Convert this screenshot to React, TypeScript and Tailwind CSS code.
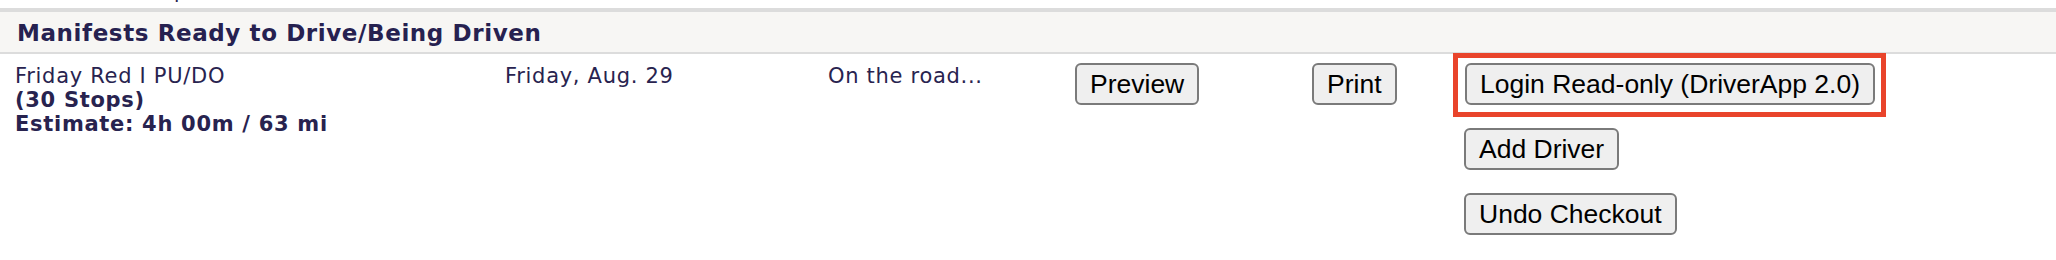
// Manifest table section: "Ready to Drive/Being Driven" header plus one manifest row
// with its action buttons. The login button carries a red highlight box.

const TEXT_FONT = "font-['DejaVu_Sans','Verdana',sans-serif]";
const BUTTON_FONT = "font-['Liberation_Sans','Arial',sans-serif]";

function LegacyButton({ children }: { children: React.ReactNode }) {
  return (
    <button
      type="button"
      className={`${BUTTON_FONT} flex h-[42px] items-center whitespace-nowrap rounded-[6px] border-2 border-[#7a7a7a] bg-[#efefef] px-[13px] text-[26.5px] leading-none tracking-normal text-black`}
    >
      {children}
    </button>
  );
}

export default function App() {
  return (
    <div className={`${TEXT_FONT} h-[260px] w-full overflow-hidden bg-white text-[#28234f]`}>
      {/* tail of the previous section, clipped */}
      <div className="h-[8px] overflow-hidden">
        <div className="-mt-[19px] pl-[174px] text-[20px] leading-[20px]">p</div>
      </div>

      {/* Section header */}
      <div className="border-t-4 border-b-2 border-[#dcdcdc] bg-[#f7f6f4]">
        <h2 className="h-[40px] pl-[17px] pt-[2px] text-[23px] font-bold leading-[38px] tracking-[0.6px] text-[#262150]">
          Manifests Ready to Drive/Being Driven
        </h2>
      </div>

      {/* Manifest row */}
      <div className="flex pl-[15px] text-[21px] leading-[24px]">
        <div className="w-[490px] shrink-0 pt-[10px] tracking-[0.7px]">
          <div>Friday Red I PU/DO</div>
          <div className="font-bold">(30 Stops)</div>
          <div className="font-bold">Estimate: 4h 00m / 63 mi</div>
        </div>
        <div className="w-[323px] shrink-0 pt-[10px] tracking-[0.7px]">Friday, Aug. 29</div>
        <div className="w-[247px] shrink-0 pt-[10px] tracking-[0.7px]">On the road...</div>
        <div className="w-[237px] shrink-0 pt-[9px]">
          <LegacyButton>Preview</LegacyButton>
        </div>
        <div className="w-[152px] shrink-0 pt-[9px]">
          <LegacyButton>Print</LegacyButton>
        </div>
        <div className="flex flex-col items-start gap-[23px] pt-[9px]">
          <div className="relative pl-px">
            <LegacyButton>Login Read-only (DriverApp 2.0)</LegacyButton>
            <div className="pointer-events-none absolute -left-[11px] -top-[10px] h-[64px] w-[433px] border-[5px] border-[#e9442b]" />
          </div>
          <LegacyButton>Add Driver</LegacyButton>
          <LegacyButton>Undo Checkout</LegacyButton>
        </div>
      </div>
    </div>
  );
}
